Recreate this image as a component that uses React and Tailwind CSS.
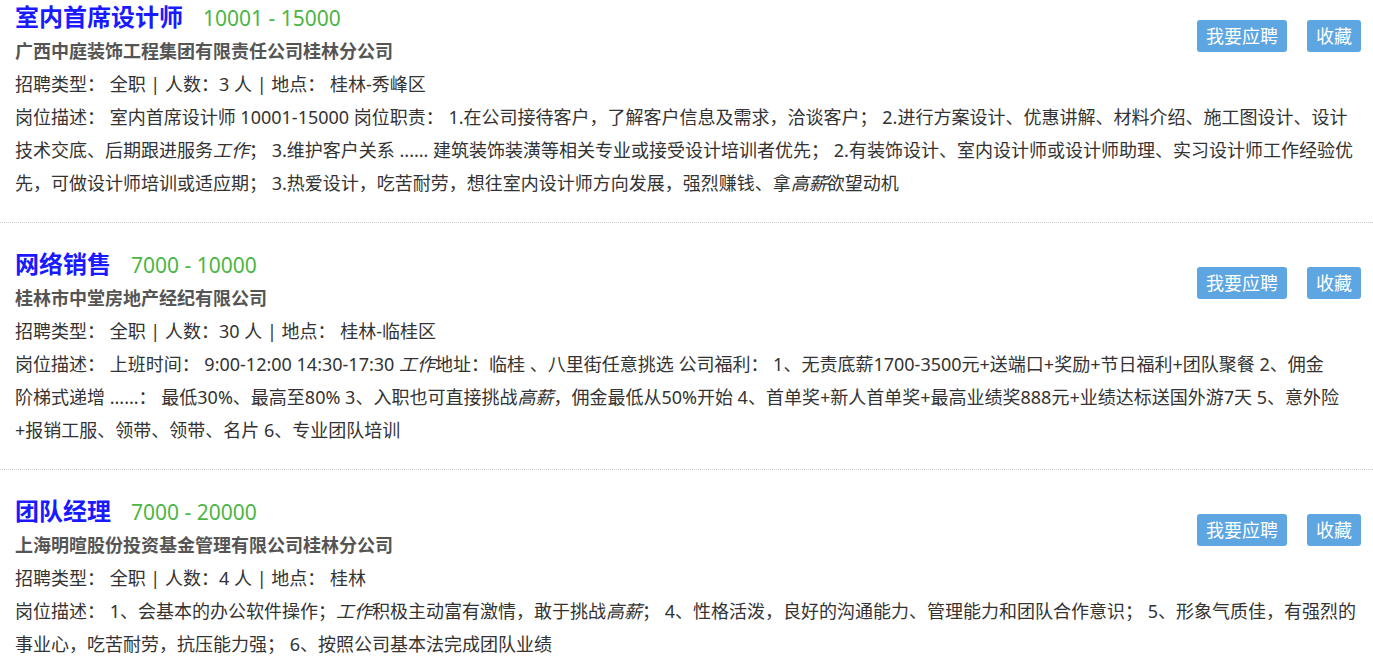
import React from 'react';

const jobs = [
  {
    title: '室内首席设计师',
    salary: '10001 - 15000',
    company: '广西中庭装饰工程集团有限责任公司桂林分公司',
    count: '3',
    place: '桂林-秀峰区',
    desc: (
      <>
        室内首席设计师 10001-15000 岗位职责： 1.在公司接待客户，了解客户信息及需求，洽谈客户； 2.进行方案设计、优惠讲解、材料介绍、施工图设计、设计技术交底、后期跟进服务<em>工作</em>； 3.维护客户关系 ...... 建筑装饰装潢等相关专业或接受设计培训者优先； 2.有装饰设计、室内设计师或设计师助理、实习设计师工作经验优先，可做设计师培训或适应期； 3.热爱设计，吃苦耐劳，想往室内设计师方向发展，强烈赚钱、拿<em>高薪</em>欲望动机
      </>
    ),
  },
  {
    title: '网络销售',
    salary: '7000 - 10000',
    company: '桂林市中堂房地产经纪有限公司',
    count: '30',
    place: '桂林-临桂区',
    desc: (
      <>
        上班时间： 9:00-12:00 14:30-17:30 <em>工作</em>地址：临桂 、八里街任意挑选 公司福利： 1、无责底薪1700-3500元+送端口+奖励+节日福利+团队聚餐 2、佣金
        <br />
        阶梯式递增 ......： 最低30%、最高至80% 3、入职也可直接挑战<em>高薪</em>，佣金最低从50%开始 4、首单奖+新人首单奖+最高业绩奖888元+业绩达标送国外游7天 5、意外险
        <br />
        +报销工服、领带、领带、名片 6、专业团队培训
      </>
    ),
  },
  {
    title: '团队经理',
    salary: '7000 - 20000',
    company: '上海明暄股份投资基金管理有限公司桂林分公司',
    count: '4',
    place: '桂林',
    desc: (
      <>
        1、会基本的办公软件操作；<em>工作</em>积极主动富有激情，敢于挑战<em>高薪</em>； 4、性格活泼，良好的沟通能力、管理能力和团队合作意识； 5、形象气质佳，有强烈的事业心，吃苦耐劳，抗压能力强； 6、按照公司基本法完成团队业绩
      </>
    ),
  },
];

const JobCard = ({ job, first }) => (
  <div
    className={`px-[15px] pb-[22px] border-b border-dotted border-[#c8c8c8] ${first ? 'pt-0' : 'pt-[24px]'}`}
  >
    <div className="flex justify-between">
      <div>
        <div className="flex items-baseline h-[34px] leading-[34px]">
          <span className="text-[24px] font-bold text-[#1a1aff]">{job.title}</span>
          <span className="ml-[20px] text-[21px] text-[#4db543]">{job.salary}</span>
        </div>
        <div className="text-[18px] font-bold text-[#555] leading-[34px]">{job.company}</div>
        <div className="text-[18px] text-[#333] leading-[33px]">
          招聘类型： 全职 | 人数：{job.count} 人 | 地点： {job.place}
        </div>
      </div>
      <div className="flex gap-[20px] mt-[20px] self-start mr-[-3px]">
        <button className="h-[32px] px-[9px] rounded-[3px] bg-[#5ea6e2] text-white text-[18px] leading-[32px]">
          我要应聘
        </button>
        <button className="h-[32px] px-[9px] rounded-[3px] bg-[#5ea6e2] text-white text-[18px] leading-[32px]">
          收藏
        </button>
      </div>
    </div>
    <div className="text-[18px] text-[#333] leading-[33px]">岗位描述： {job.desc}</div>
  </div>
);

export default function App() {
  return (
    <div className="bg-white min-h-screen font-['Noto_Sans','Noto_Sans_CJK_SC',sans-serif]">
      {jobs.map((job, i) => (
        <JobCard key={i} job={job} first={i === 0} />
      ))}
    </div>
  );
}
